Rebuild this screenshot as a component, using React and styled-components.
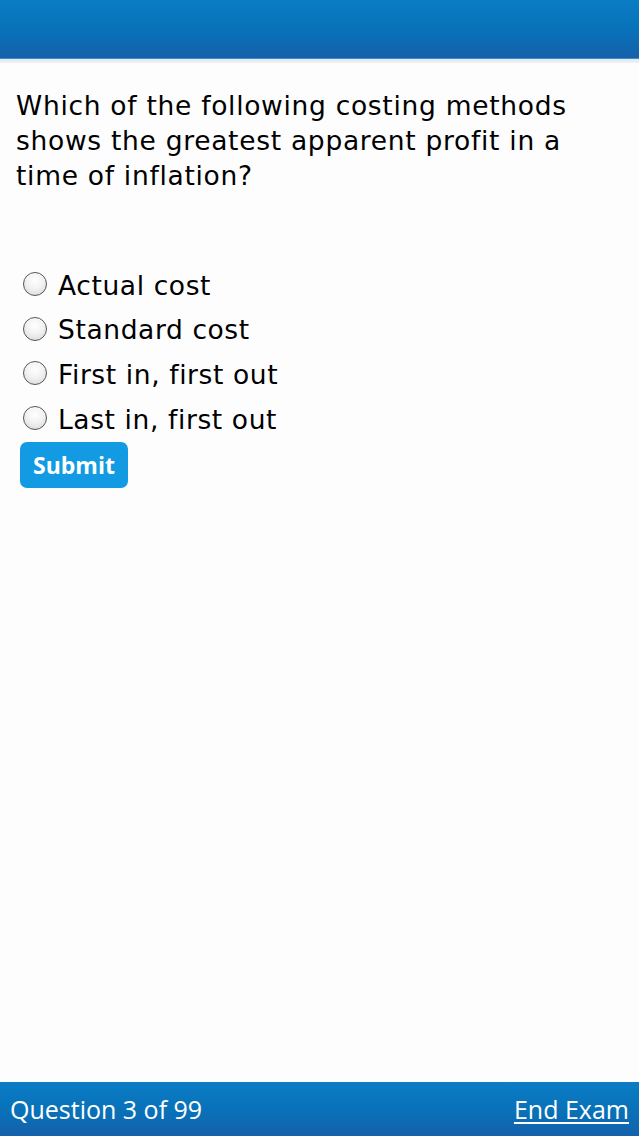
import React from "react";
import styled, { createGlobalStyle } from "styled-components";

const Global = createGlobalStyle`
  html, body { margin: 0; padding: 0; background: #fff; }
  body { width: 639px; height: 1136px; overflow: hidden; }
  #root { height: 1136px; }
`;

const Page = styled.div`
  display: flex;
  flex-direction: column;
  height: 1136px;
  background: #fdfdfe;
`;

const Header = styled.div`
  height: 58px;
  background: linear-gradient(to bottom, #0a7cc5 0%, #0871b8 55%, #1560aa 100%);
  border-bottom: 1px solid #3f8fcc;
`;

const HeaderShadow = styled.div`
  height: 4px;
  background: linear-gradient(to bottom, #dfe8f1, #eef2f6);
`;

const Content = styled.main`
  flex: 1;
  padding: 25px 0 0 16px;
  font-family: "DejaVu Sans", Verdana, sans-serif;
  font-variant-ligatures: none;
  color: #000;
`;

const Question = styled.p`
  margin: 0;
  font-size: 26.5px;
  line-height: 35px;
  letter-spacing: 0.7px;
  width: 600px;
`;

const Options = styled.div`
  display: flex;
  flex-direction: column;
  margin-top: 70px;
  padding-left: 7px;
`;

const Option = styled.label`
  display: flex;
  align-items: center;
  gap: 11px;
  height: 44.6px;
  font-size: 26.5px;
  letter-spacing: 0.6px;
`;

const Radio = styled.span`
  width: 22px;
  height: 22px;
  border-radius: 50%;
  border: 1px solid #555;
  background: radial-gradient(circle at 50% 35%, #ffffff 0%, #f2f2f2 45%, #d4d4d4 100%);
  box-shadow: inset 0 1px 1px rgba(255,255,255,0.8);
  flex: none;
  position: relative;
  top: -1px;
`;

const SubmitButton = styled.button`
  margin-top: 1px;
  margin-left: 4px;
  width: 108px;
  height: 46px;
  border: none;
  border-radius: 7px;
  background: #129be3;
  color: #fff;
  font-family: "Open Sans", "Noto Sans", sans-serif;
  font-weight: 700;
  font-size: 23px;
  padding: 0;
`;

const Footer = styled.footer`
  height: 54px;
  display: flex;
  align-items: center;
  justify-content: space-between;
  padding: 0 10px;
  background: linear-gradient(to bottom, #0a7cc5 0%, #0871b8 55%, #1560aa 100%);
  font-family: "Open Sans", "Noto Sans", sans-serif;
  font-size: 25px;
  color: #fff;
`;

const FooterLink = styled.span`
  text-decoration: underline;
  text-underline-offset: 3px;
  text-decoration-thickness: 2px;
`;

const options = ["Actual cost", "Standard cost", "First in, first out", "Last in, first out"];

export default function App() {
  return (
    <Page>
      <Global />
      <Header />
      <HeaderShadow />
      <Content>
        <Question>
          Which of the following costing methods shows the greatest apparent profit in a time of inflation?
        </Question>
        <Options>
          {options.map((o) => (
            <Option key={o}>
              <Radio />
              {o}
            </Option>
          ))}
        </Options>
        <SubmitButton>Submit</SubmitButton>
      </Content>
      <Footer>
        <span>Question 3 of 99</span>
        <FooterLink>End Exam</FooterLink>
      </Footer>
    </Page>
  );
}
